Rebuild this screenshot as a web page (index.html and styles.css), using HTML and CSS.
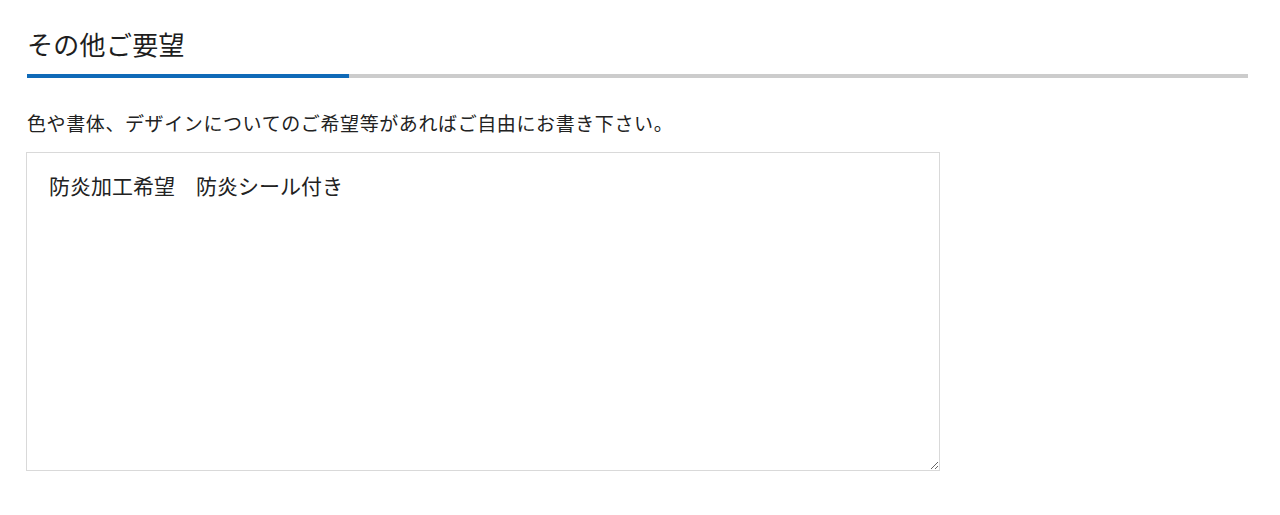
FILE: index.html
```html
<!DOCTYPE html>
<html lang="ja">
<head>
<meta charset="utf-8">
<title>その他ご要望</title>
<link rel="stylesheet" href="styles.css">
</head>
<body>
<section class="section">
  <h2 class="section-title">その他ご要望</h2>
  <div class="title-rule"><span class="title-rule-accent"></span></div>
  <p class="section-lead">色や書体、デザインについてのご希望等があればご自由にお書き下さい。</p>
  <textarea class="request-box">防炎加工希望　防炎シール付き</textarea>
</section>
</body>
</html>
```

FILE: styles.css
```css
html, body {
  margin: 0;
  padding: 0;
  background: #ffffff;
}
body {
  font-family: "Noto Sans CJK JP", "Noto Sans", sans-serif;
  color: #222222;
}
.section {
  padding: 26px 32px 0 27px;
}
.section-title {
  margin: 0;
  font-size: 26px;
  font-weight: 400;
  line-height: 36px;
  color: #1e1e1e;
  letter-spacing: 0.3px;
}
.title-rule {
  margin-top: 12px;
  height: 4px;
  background: #cccccc;
  display: flex;
}
.title-rule-accent {
  width: 322px;
  background: #0f6ab8;
}
.section-lead {
  margin: 32px 0 0;
  font-size: 19px;
  line-height: 26px;
  color: #222222;
  letter-spacing: 0.6px;
}
.request-box {
  display: block;
  margin: 16px 0 0 -1px;
  width: 914px;
  height: 319px;
  box-sizing: border-box;
  border: 1px solid #d9d9d9;
  border-radius: 0;
  padding: 17px 22px;
  font-family: "Noto Sans CJK JP", "Noto Sans", sans-serif;
  font-size: 21px;
  line-height: 30px;
  color: #222222;
  background: #ffffff;
  resize: vertical;
  outline: none;
}
```
